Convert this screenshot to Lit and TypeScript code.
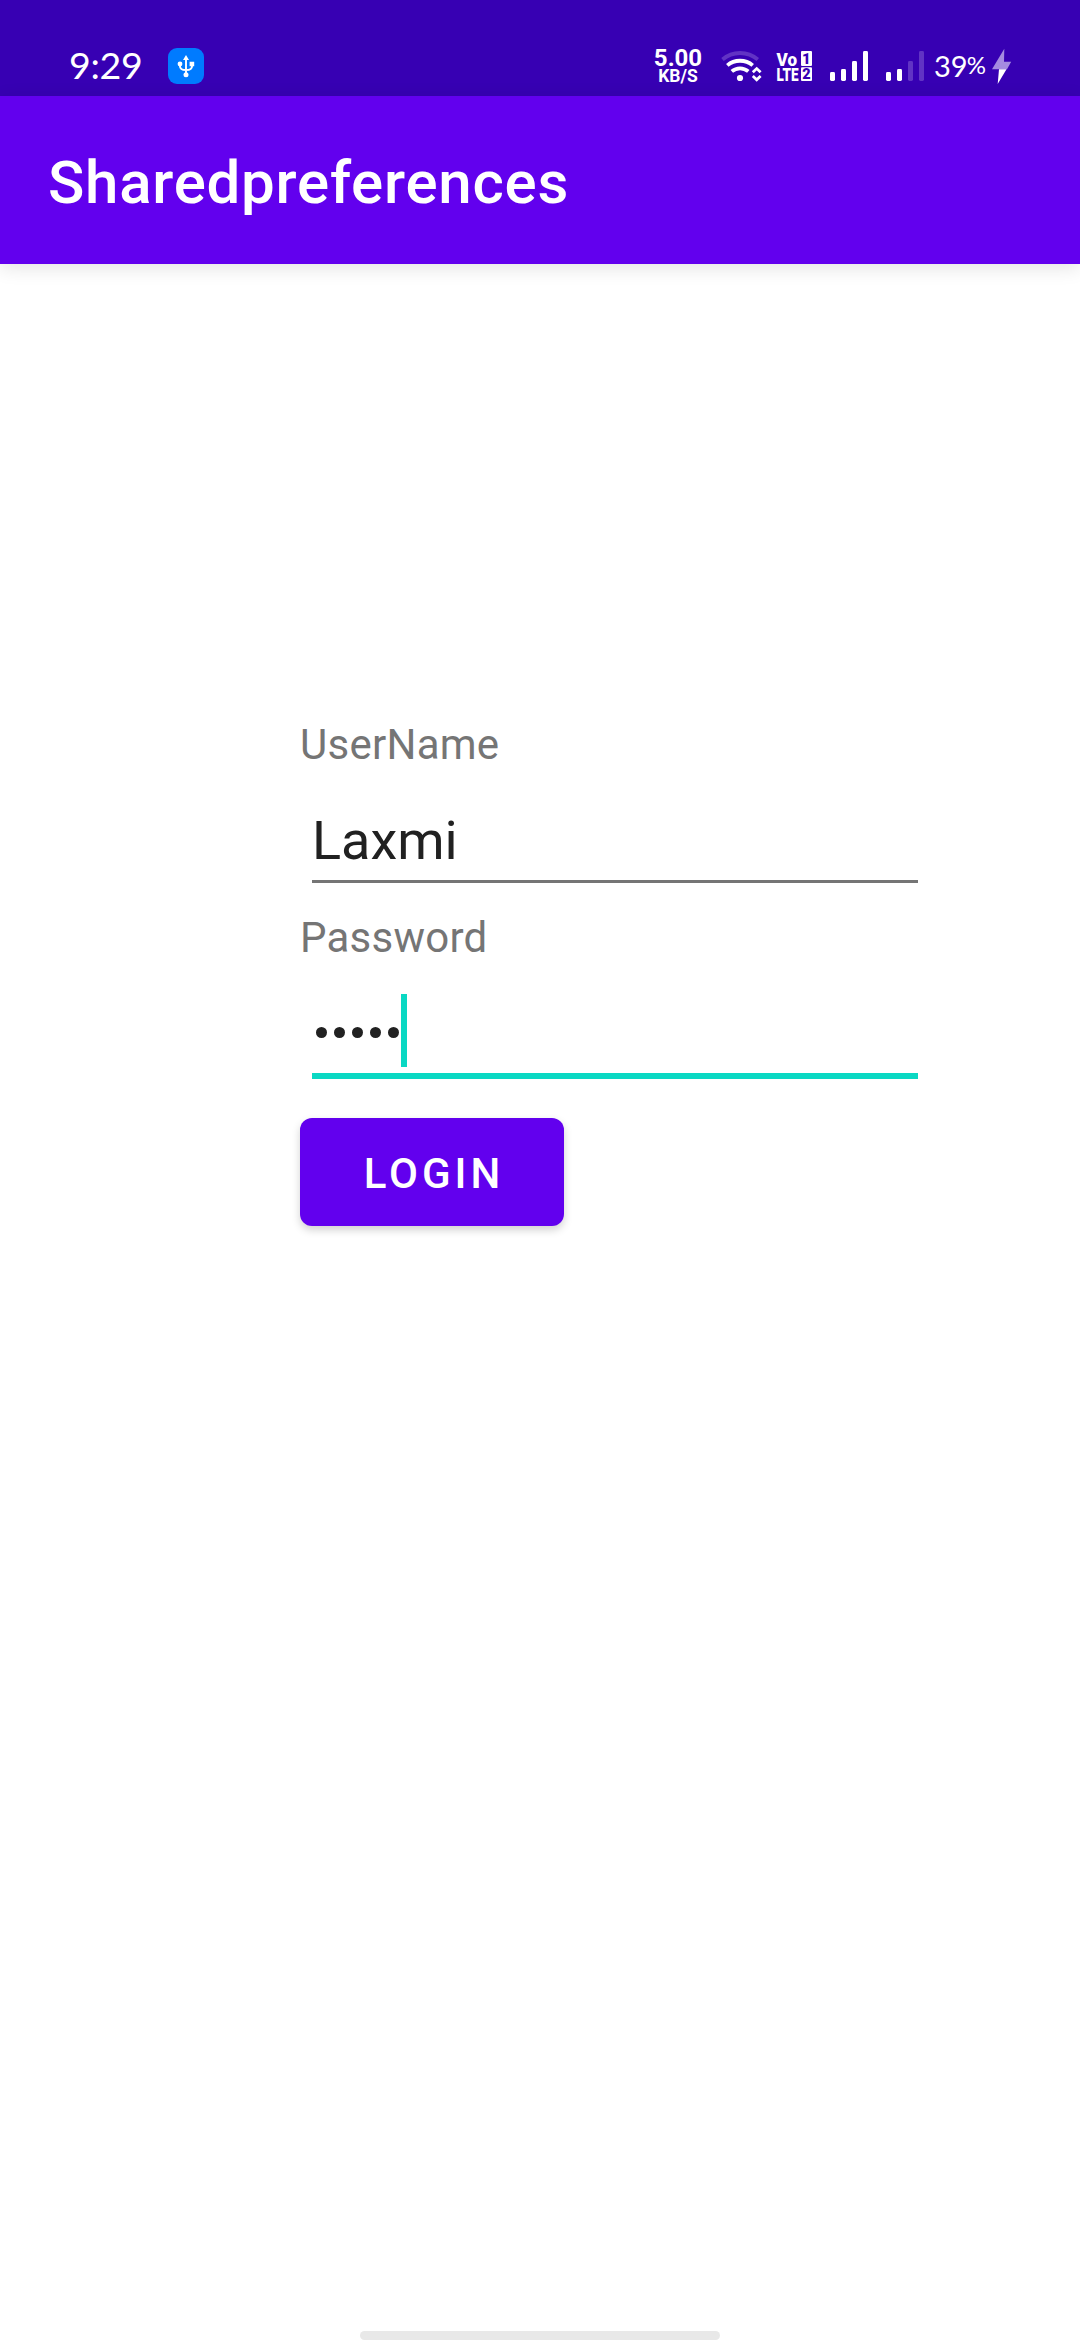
import { LitElement, html, css, svg } from "lit";
import { customElement, property, state } from "lit/decorators.js";

@customElement("signal-bars")
class SignalBars extends LitElement {
  @property({ type: Number }) level = 4;

  static styles = css`
    :host { display: block; width: 38px; height: 30px; }
    .bars { display: block; }
    .bar { fill: #fff; }
    .off { fill: #6133c4; }
  `;

  render() {
    const tops = [21, 18, 10, 0];
    return html`<svg class="bars" width="38" height="30" viewBox="0 0 38 30">
      ${tops.map((top, i) => svg`<rect class=${i < this.level ? "bar" : "off"}
        x=${i * 11} y=${top} width="5" height=${30 - top} rx="1.4"></rect>`)}
    </svg>`;
  }
}

@customElement("status-bar")
class StatusBar extends LitElement {
  static styles = css`
    :host {
      display: flex;
      align-items: flex-start;
      box-sizing: border-box;
      height: 96px;
      padding: 48px 68px 0 69px;
      background: #3700b3;
      color: #fff;
    }
    svg { display: block; overflow: visible; }
    .time {
      width: 99px;
      font: 400 37.5px/34px Lato, sans-serif;
      letter-spacing: -0.3px;
      white-space: nowrap;
    }
    .right { display: flex; align-items: flex-start; margin-left: auto; }
    .speed {
      display: flex;
      flex-direction: column;
      align-items: center;
      width: 56px;
      font-family: Roboto, sans-serif;
      font-weight: 700;
      margin-right: 14px;
    }
    .rate { font-size: 24px; line-height: 20px; }
    .unit { font-size: 17.5px; line-height: 17px; }
    .wifi { margin-right: 14px; }
    .volte { margin: 2px 18px 0 0; }
    .sig { margin: 3px 18px 0 0; }
    .sig.last { margin-right: 10px; }
    .battery {
      display: flex;
      width: 57px;
      font: 400 29px/35px Lato, sans-serif;
      white-space: nowrap;
    }
    .pct { font-size: 24px; line-height: 33px; margin-left: -1px; }
    .tiny { font-family: Roboto, sans-serif; font-weight: 900; fill: #fff; }
    .ink { fill: #3700b3; }
  `;

  render() {
    return html`
      <div class="time">9:29</div>
      <svg width="36" height="36" viewBox="0 0 36 36">
        <rect width="36" height="36" rx="9" fill="#007bff"></rect>
        <g fill="none" stroke="#fff" stroke-width="1.9">
          <path d="M18 10V26M12 16v2.2c0 2.6 3 3.8 6 3.8s6-1.2 6-3.8V16"></path>
        </g>
        <path fill="#fff" d="M18 7l3 5h-6zM21.6 13.8h4.6v4.4h-4.6z"></path>
        <circle cx="12" cy="16" r="2.4" fill="#fff"></circle>
        <circle cx="18" cy="26.7" r="2.5" fill="#fff"></circle>
      </svg>
      <div class="right">
        <div class="speed"><span class="rate">5.00</span><span class="unit">KB/S</span></div>
        <svg class="wifi" width="42" height="36" viewBox="0 0 42 36">
          <g fill="none" stroke-width="3.8">
            <path stroke="#6133c4" d="M2.5 11.5C12.5 2.8 27.500 2.800 37.800 11.500"></path>
            <path stroke="#fff" d="M7.3 17.4C14.6 11.2 25.4 11.2 32.7 17.4"></path>
            <path stroke="#fff" d="M11.8 23.4C16.6 19.3 23.4 19.3 28.3 23.4"></path>
          </g>
          <circle cx="20" cy="30" r="3.1" fill="#fff"></circle>
          <path fill="none" stroke="#fff" stroke-width="2.8"
            d="M32.8 24.3l3.9-3.7 3.9 3.7M32.8 28l3.9 3.7 3.9-3.7"></path>
        </svg>
        <svg class="volte" width="36" height="32" viewBox="0 0 36 32">
          <text class="tiny" x="0.5" y="15.5" font-size="19" textLength="20.5" lengthAdjust="spacingAndGlyphs">Vo</text>
          <text class="tiny" x="0.5" y="31" font-size="19" textLength="22" lengthAdjust="spacingAndGlyphs">LTE</text>
          <rect x="25" y="1" width="11" height="15" rx="1" fill="#fff"></rect>
          <rect x="25" y="17.3" width="11" height="13.7" rx="1" fill="#fff"></rect>
          <text class="tiny ink" x="30.3" y="13.8" font-size="15" text-anchor="middle">1</text>
          <text class="tiny ink" x="30.5" y="29.3" font-size="14.5" text-anchor="middle">2</text>
        </svg>
        <signal-bars class="sig" .level=${4}></signal-bars>
        <signal-bars class="sig last" .level=${2}></signal-bars>
        <div class="battery"><span>39</span><span class="pct">%</span></div>
        <svg width="21" height="37" viewBox="0 0 21 37">
          <path fill="#a58be0" d="M13.3.7L1 21.3H16L20.2 13.7H13z"></path>
          <path fill="#fff" d="M1 21.3H8L6.7 36 15.5 21.3z"></path>
        </svg>
      </div>
    `;
  }
}

@customElement("text-field")
class TextField extends LitElement {
  @property() label = "";
  @property() value = "";
  @property({ type: Boolean }) secret = false;
  @property({ type: Boolean, reflect: true }) focused = false;

  static styles = css`
    :host { display: block; font-family: Roboto, sans-serif; }
    .label {
      height: 57px;
      line-height: 57px;
      font-size: 42px;
      letter-spacing: 0.25px;
      color: #757575;
    }
    .box {
      display: flex;
      box-sizing: border-box;
      height: 110px;
      margin: 0 12px;
      padding-top: 32px;
      border-bottom: 3px solid #757575;
      color: #212121;
      font-size: 54px;
      line-height: 72px;
    }
    :host([focused]) .box {
      height: 113px;
      padding-top: 28px;
      border-bottom: 6px solid #0ad8c3;
    }
    .dots { display: flex; gap: 7px; padding: 32.5px 0 0 3.5px; }
    .dot { width: 11px; height: 11px; border-radius: 50%; background: #212121; }
    .caret { width: 6px; height: 73px; margin-left: 2.5px; background: #0ad8c3; }
  `;

  render() {
    return html`
      <div class="label">${this.label}</div>
      <div class="box">
        ${this.secret
          ? html`<div class="dots">${[...this.value].map(() => html`<span class="dot"></span>`)}</div>`
          : html`<span>${this.value}</span>`}
        ${this.focused ? html`<span class="caret"></span>` : ""}
      </div>
    `;
  }
}

@customElement("app-root")
class AppRoot extends LitElement {
  @state() private user = "Laxmi";
  @state() private pass = "12345";

  static styles = css`
    :host {
      display: flex;
      flex-direction: column;
      height: 2340px;
      background: #fff;
      font-family: Roboto, sans-serif;
    }
    .appbar {
      display: flex;
      align-items: center;
      box-sizing: border-box;
      height: 168px;
      padding: 5px 48px 0;
      background: #6200ee;
      color: #fff;
      font-size: 60px;
      font-weight: 500;
      letter-spacing: 0.75px;
      box-shadow: 0 4px 18px rgba(0, 0, 0, 0.11);
    }
    .form {
      flex: 1;
      display: flex;
      flex-direction: column;
      align-items: flex-start;
      padding: 452px 150px 0 300px;
    }
    .field { width: 630px; }
    .second { margin-top: 26px; }
    .login {
      margin-top: 39px;
      width: 264px;
      height: 108px;
      padding: 3px 0 0 4px;
      border: 0;
      border-radius: 12px;
      background: #6200ee;
      color: #fff;
      font: 500 42px Roboto, sans-serif;
      letter-spacing: 4px;
      box-shadow: 0 4px 8px rgba(0, 0, 0, 0.18);
    }
    .handle {
      align-self: center;
      width: 360px;
      height: 9px;
      border-radius: 4.5px;
      background: #e8e8e8;
    }
  `;

  render() {
    return html`
      <status-bar></status-bar>
      <header class="appbar">Sharedpreferences</header>
      <main class="form">
        <text-field class="field" label="UserName" .value=${this.user}></text-field>
        <text-field class="field second" label="Password" .value=${this.pass} secret focused></text-field>
        <button class="login">LOGIN</button>
      </main>
      <div class="handle"></div>
    `;
  }
}
